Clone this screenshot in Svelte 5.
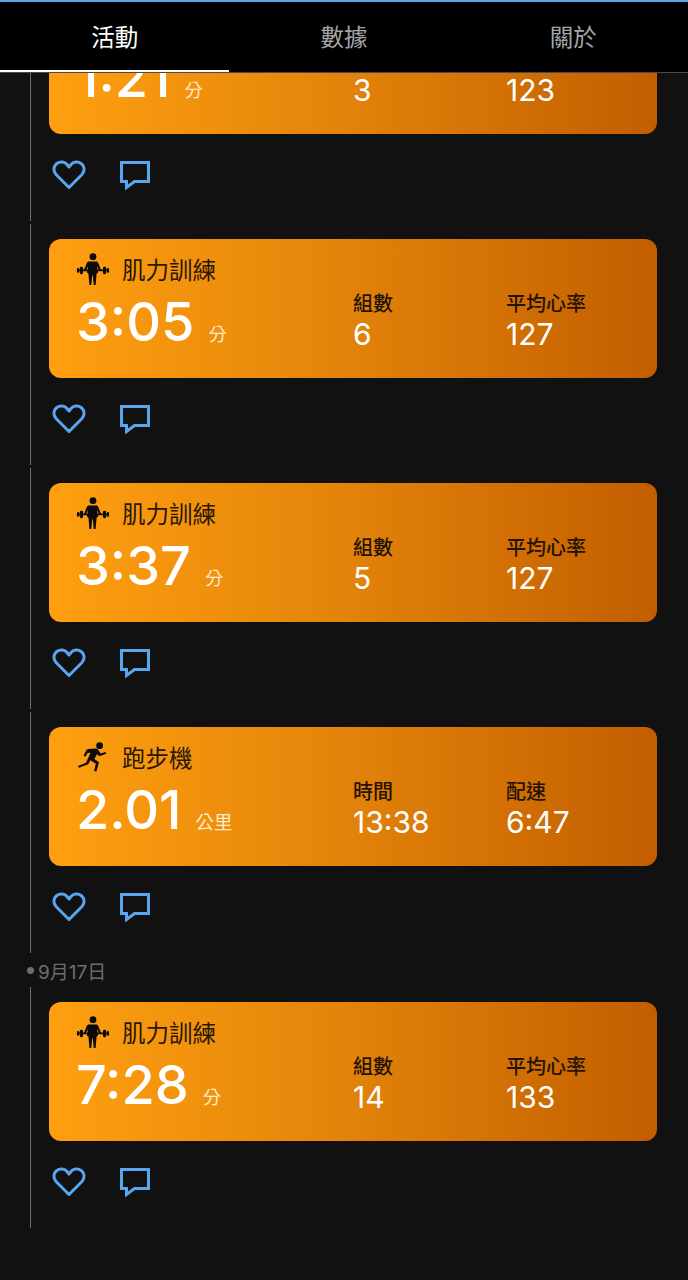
<script>
	const tabs = ['活動', '數據', '關於'];

	const items = [
		{ kind: 'lift', title: '肌力訓練', main: '1:21', unit: '分', a: ['組數', '3'], b: ['平均心率', '123'] },
		{ kind: 'lift', title: '肌力訓練', main: '3:05', unit: '分', a: ['組數', '6'], b: ['平均心率', '127'] },
		{ kind: 'lift', title: '肌力訓練', main: '3:37', unit: '分', a: ['組數', '5'], b: ['平均心率', '127'] },
		{ kind: 'run', title: '跑步機', main: '2.01', unit: '公里', a: ['時間', '13:38'], b: ['配速', '6:47'] },
		{ date: '9月17日', kind: 'lift', title: '肌力訓練', main: '7:28', unit: '分', a: ['組數', '14'], b: ['平均心率', '133'] }
	];
</script>

<div class="page">
	<header class="tabs">
		{#each tabs as tab, i}
			<div class="tab" class:active={i === 0}>{tab}</div>
		{/each}
	</header>

	<main class="feed">
		{#each items as item}
			{#if item.date}
				<div class="date"><span class="dot"></span>{item.date}</div>
			{/if}
			<section class="item">
				<div class="card">
					<div class="title">
						{#if item.kind === 'lift'}
							<svg class="sport" viewBox="0 0 36 36" fill="#0b0b0b">
								<circle cx="18" cy="5" r="3.6" />
								<path d="M14.6 10h6.8c1 0 1.6.6 2 1.5l3.2 7.5-1.8.8-2.6-5 1.2 7-1.6 1.2-1 12h-2l-1-10.500h-.6l-1 10.500h-2l-1-12-1.600-1.200 1.200-7-2.600 5-1.800-.8 3.200-7.500c.4-.9 1-1.500 2-1.500z" />
								<rect x="2" y="18.400" width="32" height="2" rx="1" />
								<rect x="4" y="15.500" width="3.400" height="8" rx="1.400" />
								<rect x="28.600" y="15.500" width="3.400" height="8" rx="1.400" />
								<rect x="1" y="17" width="2.200" height="5" rx="1" />
								<rect x="32.800" y="17" width="2.200" height="5" rx="1" />
							</svg>
						{:else}
							<svg class="sport" viewBox="0 0 36 36" fill="#0b0b0b">
								<circle cx="25" cy="6" r="3.600" />
								<path d="M13 9.500l8-.5c1 0 1.800.4 2.400 1.200l2.600 4 5.500-1.600.6 2-6.800 2.300c-.8.200-1.500 0-2-.7l-1-1.500-2.800 5.300 4.800 3.600-2.600 9.700-2.500-.6 1.800-7.600-5.800-3.700-2.300 4.400-9.900 3.600-.9-2 8.500-3.400 4.800-10.600-3 .3-2.500 4-1.900-1.100 2.800-5.500c.4-.7 1-1.100 1.700-1.200z" />
							</svg>
						{/if}
						<span>{item.title}</span>
					</div>
					<div class="figures">
						<div class="main">
							<span class="big">{item.main}</span>
							<span class="unit">{item.unit}</span>
						</div>
						<div class="stat first">
							<div class="label">{item.a[0]}</div>
							<div class="value">{item.a[1]}</div>
						</div>
						<div class="stat">
							<div class="label">{item.b[0]}</div>
							<div class="value">{item.b[1]}</div>
						</div>
					</div>
				</div>
				<div class="actions">
					<svg class="heart" viewBox="0 0 34 30" fill="none" stroke="#5aa5f0" stroke-width="3">
						<path d="M17 27.500L4 14.500C.8 11 1.500 6 4.500 3.700 8 1 12.800 1.500 15 4.500L17 7l2-2.500c2.200-3 7-3.500 10.500-.8 3 2.300 3.700 7.300.5 10.800z" stroke-linejoin="round" />
					</svg>
					<svg class="comment" viewBox="0 0 30 29" fill="none" stroke="#5aa5f0" stroke-width="3">
						<path d="M1.500 1.500h27v19H14.500L6.500 26.500v-6h-5z" />
					</svg>
				</div>
			</section>
		{/each}
	</main>
</div>

<style>
	:global(body) {
		background: #111112;
	}

	.page {
		position: relative;
		width: 688px;
		height: 1280px;
		overflow: hidden;
		background: #111112;
		font-family: Inter, "Noto Sans CJK TC", sans-serif;
	}

	.tabs {
		position: absolute;
		top: 0;
		left: 0;
		right: 0;
		z-index: 2;
		display: grid;
		grid-template-columns: repeat(3, 1fr);
		height: 71px;
		background: #000;
		border-top: 2px solid #5aa5f0;
		border-bottom: 1px solid #4a4a4a;
		box-sizing: border-box;
		height: 73px;
	}

	.tab {
		display: flex;
		align-items: center;
		justify-content: center;
		padding-bottom: 2px;
		font-size: 23.500px;
		color: #a6a6a6;
	}

	.tab.active {
		color: #fff;
		box-shadow: inset 0 -2px 0 #fff;
	}

	.feed {
		display: flex;
		flex-direction: column;
		margin-top: -20px;
	}

	.item {
		margin-left: 30px;
		margin-bottom: 3px;
		padding: 15px 31px 0 18px;
		height: 226px;
		border-left: 1.500px solid #6f6f70;
	}

	.card {
		display: flex;
		flex-direction: column;
		height: 139px;
		box-sizing: border-box;
		padding: 10px 0 0 27px;
		border-radius: 12px;
		background: linear-gradient(90deg, #ff9f10 0%, #e5860b 45%, #c25e00 100%);
	}

	.title {
		display: flex;
		align-items: center;
		gap: 12px;
		height: 40px;
		font-size: 23.500px;
		color: #2a1703;
	}

	.sport {
		width: 34px;
		height: 36px;
	}

	.figures {
		display: flex;
		align-items: flex-start;
	}

	.main {
		width: 277px;
		display: flex;
		align-items: baseline;
		gap: 14px;
		color: #fff;
		margin-top: 1px;
	}

	.big {
		font-size: 54px;
		line-height: 64px;
		font-weight: 500;
	}

	.unit {
		font-size: 18.500px;
		color: #ffeacb;
	}

	.stat {
		margin-top: 3px;
	}

	.stat.first {
		width: 153px;
	}

	.label {
		font-size: 20px;
		line-height: 24px;
		font-weight: 500;
		color: #241302;
	}

	.value {
		font-size: 30px;
		line-height: 36px;
		color: #fff;
	}

	.actions {
		display: flex;
		align-items: center;
		gap: 34px;
		margin: 26px 0 0 3px;
	}

	.heart {
		width: 34px;
		height: 30px;
	}

	.comment {
		width: 30px;
		height: 29px;
	}

	.date {
		display: flex;
		align-items: center;
		gap: 4px;
		height: 34px;
		margin: -3px 0 0 27px;
		font-size: 19px;
		color: #6d6d6e;
	}

	.dot {
		width: 7px;
		height: 7px;
		border-radius: 50%;
		background: #6d6d6e;
	}
</style>
